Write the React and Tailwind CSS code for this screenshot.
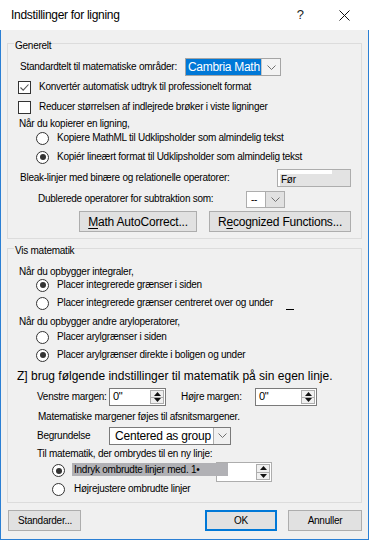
function Check() {
  return (
    <div className="w-[13px] h-[13px] border border-[#333] bg-white flex items-center justify-center shrink-0">
      <svg width="11" height="11" viewBox="0 0 11 11">
        <path d="M1.5 5.5 L4.2 8.2 L9.5 2.5" fill="none" stroke="#555" strokeWidth="1.1" />
      </svg>
    </div>
  );
}

function Box() {
  return <div className="w-[13px] h-[13px] border border-[#333] bg-white shrink-0" />;
}

function Radio({ on }) {
  return (
    <div className="w-[13px] h-[13px] rounded-full border border-[#333] bg-white flex items-center justify-center shrink-0">
      {on && <div className="w-[6px] h-[6px] rounded-full bg-[#333]" />}
    </div>
  );
}

function Chevron() {
  return (
    <svg width="9" height="5" viewBox="0 0 9 5">
      <path d="M0.5 0.5 L4.5 4.5 L8.5 0.5" fill="none" stroke="#707070" strokeWidth="1" />
    </svg>
  );
}

function Spinner() {
  return (
    <div className="w-[14px] my-[1px] mr-[1px] flex flex-col border border-[#adadad] bg-[#f0f0f0]">
      <div className="flex-1 flex items-center justify-center border-b border-[#adadad]">
        <svg width="7" height="4" viewBox="0 0 7 4">
          <path d="M0 4 L3.5 0 L7 4 Z" fill="#111" />
        </svg>
      </div>
      <div className="flex-1 flex items-center justify-center">
        <svg width="7" height="4" viewBox="0 0 7 4">
          <path d="M0 0 L3.5 4 L7 0 Z" fill="#111" />
        </svg>
      </div>
    </div>
  );
}

function Btn({ children, className }) {
  return (
    <div className={"h-[21px] flex items-center justify-center bg-[#e1e1e1] border border-[#adadad] " + className}>
      {children}
    </div>
  );
}

export default function App() {
  return (
    <div className="w-[369px] h-[540px] flex flex-col bg-white text-black text-[10px] leading-[12px] tracking-[-0.25px] font-['Liberation_Sans',Arial,sans-serif]">
      {/* title bar */}
      <div className="h-[30px] flex items-center shrink-0">
        <span className="ml-[11px] text-[12px] tracking-[-0.3px]">Indstillinger for ligning</span>
        <span className="ml-auto text-[13px] tracking-normal text-[#222]">?</span>
        <svg className="ml-[35px] mr-[19px]" width="11" height="11" viewBox="0 0 11 11">
          <path d="M0.5 0.5 L10.5 10.5 M10.5 0.5 L0.5 10.5" stroke="#111" strokeWidth="1" />
        </svg>
      </div>

      <div className="flex-1 flex flex-col bg-[#f0f0f0] border-x border-b border-[#2a7fd4] px-[6px]">
        {/* Generelt */}
        <div className="relative mt-[13px] h-[196px] border border-[#dcdcdc] shrink-0">
          <span className="absolute -top-[4px] left-[6px] px-[1px] bg-[#f0f0f0]">Generelt</span>
          <div className="pt-[13px]">
            <div className="h-[20px] flex items-center pl-[12px]">
              <span className="w-[165px]">Standardtelt til matematiske områder:</span>
              <div className="w-[96px] h-[18px] flex border border-[#a5a5a5] bg-white">
                <div className="w-[75px] bg-[#0078d7] text-white text-[12px] tracking-[-0.3px] leading-[16px] pl-[2px]">Cambria Math</div>
                <div className="flex-1 flex items-center justify-center border-l border-[#c4c4c4] bg-[#f3f3f3]">
                  <Chevron />
                </div>
              </div>
            </div>
            <div className="h-[20px] flex items-center pl-[10px]">
              <Check />
              <span className="ml-[8px]">Konvertér automatisk udtryk til professionelt format</span>
            </div>
            <div className="h-[20px] flex items-center pl-[10px]">
              <Box />
              <span className="ml-[8px]">Reducer størrelsen af indlejrede brøker i viste ligninger</span>
            </div>
            <div className="h-[13px] flex items-center pl-[11px]">Når du kopierer en ligning,</div>
            <div className="h-[16px] flex items-center pl-[28px]">
              <Radio />
              <span className="ml-[8px]">Kopiere MathML til Udklipsholder som almindelig tekst</span>
            </div>
            <div className="h-[22px] flex items-center pl-[28px]">
              <Radio on />
              <span className="ml-[8px]">Kopiér lineært format til Udklipsholder som almindelig tekst</span>
            </div>
            <div className="h-[20px] flex items-center pl-[12px]">
              <span>Bleak-linjer med binære og relationelle operatorer:</span>
              <div className="ml-auto mr-[10px] w-[74px] h-[18px] flex border border-[#adadad] bg-[#e3e3e3]">
                <div className="w-[54px] bg-white pt-[4px] pl-[2px]">
                  <div className="h-[12px] bg-[#e3e3e3] pl-[1px] leading-[12px]">Før</div>
                </div>
              </div>
            </div>
            <div className="h-[22px] flex items-center pl-[30px]">
              <span>Dublerede operatorer for subtraktion som:</span>
              <div className="ml-auto mr-[76px] w-[39px] h-[17px] flex border border-[#adadad] bg-white">
                <div className="w-[18px] pl-[4px] leading-[15px]">--</div>
                <div className="flex-1 flex items-center justify-center border-l border-[#adadad] bg-[#e1e1e1]">
                  <Chevron />
                </div>
              </div>
            </div>
            <div className="mt-[1px] flex pl-[71px] gap-[12px] text-[12px] tracking-[-0.2px]">
              <Btn className="w-[118px]">
                <span><span className="underline underline-offset-2">M</span>ath AutoCorrect...</span>
              </Btn>
              <Btn className="w-[142px]">
                <span>R<span className="underline underline-offset-2">e</span>cognized Functions...</span>
              </Btn>
            </div>
          </div>
        </div>

        {/* Vis matematik */}
        <div className="relative mt-[9px] h-[255px] border border-[#dcdcdc] shrink-0">
          <span className="absolute -top-[4px] left-[6px] px-[1px] bg-[#f0f0f0]">Vis matematik</span>
          <div className="pt-[16px]">
            <div className="h-[13px] flex items-center pl-[11px]">Når du opbygger integraler,</div>
            <div className="h-[14px] flex items-center pl-[28px]">
              <Radio on />
              <span className="ml-[8px]">Placer integrerede grænser i siden</span>
            </div>
            <div className="h-[22px] flex items-center pl-[28px]">
              <Radio />
              <span className="ml-[8px]">Placer integrerede grænser centreret over og under</span>
              <span className="ml-[13px] mt-[12px] w-[8px] h-[1px] bg-black" />
            </div>
            <div className="h-[16px] flex items-center pl-[11px]">Når du opbygger andre aryloperatorer,</div>
            <div className="h-[14px] flex items-center pl-[28px]">
              <Radio />
              <span className="ml-[8px]">Placer arylgrænser i siden</span>
            </div>
            <div className="h-[22px] flex items-center pl-[28px]">
              <Radio on />
              <span className="ml-[8px]">Placer arylgrænser direkte i boligen og under</span>
            </div>
            <div className="h-[20px] flex items-center pl-[9px] text-[12px] tracking-[0px]">
              Z] brug følgende indstillinger til matematik på sin egen linje.
            </div>
            <div className="h-[22px] flex items-center pl-[29px]">
              <span className="w-[72px]">Venstre margen:</span>
              <div className="w-[57px] h-[18px] flex border border-[#7a7a7a] bg-white">
                <span className="flex-1 pl-[3px] text-[11px] leading-[15px]">0"</span>
                <Spinner />
              </div>
              <span className="ml-[15px] w-[74px]">Højre margen:</span>
              <div className="w-[62px] h-[18px] flex border border-[#7a7a7a] bg-white">
                <span className="flex-1 pl-[3px] text-[11px] leading-[15px]">0"</span>
                <Spinner />
              </div>
            </div>
            <div className="h-[18px] flex items-center pl-[30px]">Matematiske margener føjes til afsnitsmargener.</div>
            <div className="h-[19px] flex items-center pl-[29px]">
              <span className="w-[72px]">Begrundelse</span>
              <div className="w-[122px] h-[18px] flex border border-[#7a7a7a] bg-white">
                <div className="flex-1 pl-[5px] text-[12px] tracking-[-0.2px] leading-[16px]">Centered as group</div>
                <div className="w-[17px] flex items-center justify-center border-l border-[#adadad] bg-[#f0f0f0]">
                  <Chevron />
                </div>
              </div>
            </div>
            <div className="h-[17px] flex items-center pl-[29px]">Til matematik, der ombrydes til en ny linje:</div>
            <div className="h-[20px] flex items-start pl-[44px]">
              <div className="mt-[2px]">
                <Radio on />
              </div>
              <div className="relative z-10 ml-[7px] mt-[1px] w-[156px] h-[13px] bg-[#b1b1b5] pl-[2px] leading-[13px]">
                Indryk ombrudte linjer med. 1•
              </div>
              <div className="-ml-[12px] w-[56px] h-[20px] flex border border-[#adadad] bg-white">
                <span className="flex-1" />
                <Spinner />
              </div>
            </div>
            <div className="h-[14px] flex items-center pl-[44px]">
              <Radio />
              <span className="ml-[9px]">Højrejustere ombrudte linjer</span>
            </div>
          </div>
        </div>

        {/* footer buttons */}
        <div className="mt-[7px] flex">
          <Btn className="ml-[1px] w-[73px] !justify-start pl-[9px]">Standarder...</Btn>
          <div className="ml-auto w-[72px] h-[21px] flex items-center justify-center bg-[#e1e1e1] border-2 border-[#0078d7]">OK</div>
          <Btn className="ml-[11px] w-[74px]">Annuller</Btn>
        </div>
      </div>
    </div>
  );
}
